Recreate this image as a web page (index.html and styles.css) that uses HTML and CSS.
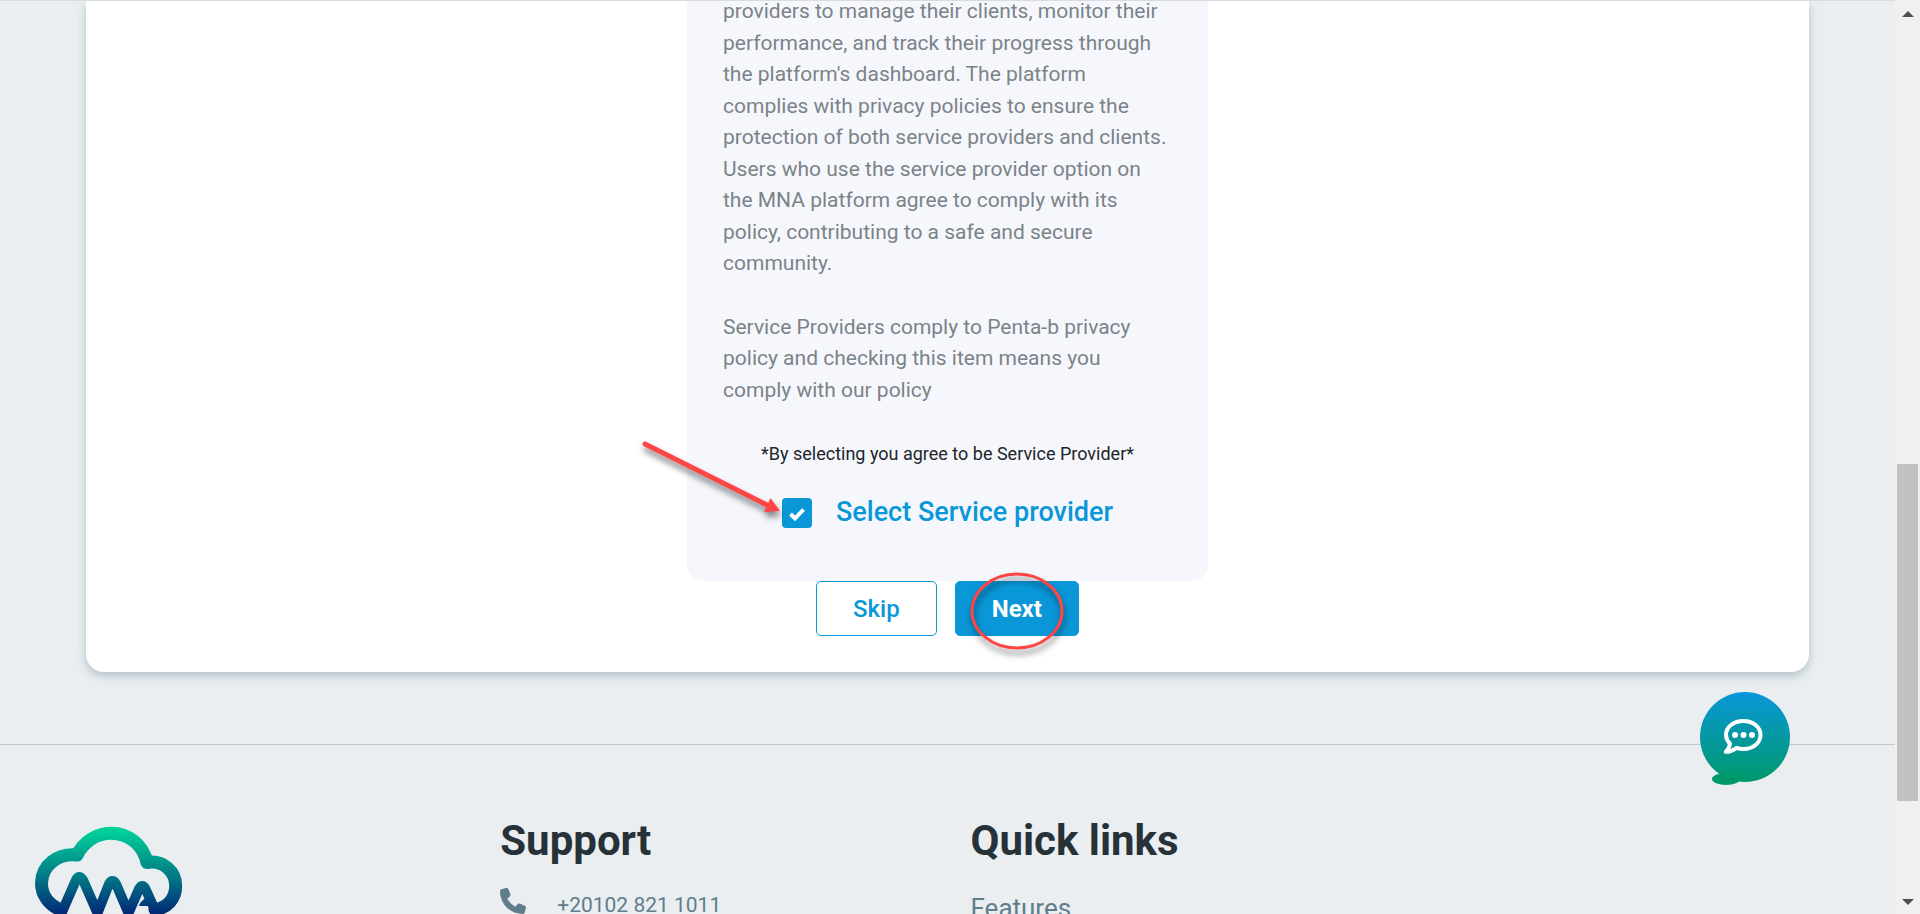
FILE: index.html
```html
<!DOCTYPE html>
<html lang="en">
<head>
  <meta charset="UTF-8">
  <meta name="viewport" content="width=device-width, initial-scale=1.0">
  <title>Service Provider - MNA</title>
  <link rel="stylesheet" href="styles.css">
</head>
<body>
  <div class="page">
    <main class="main">
      <section class="card">
        <div class="provider">
          <p class="terms">providers to manage their clients, monitor their performance, and track their progress through the platform's dashboard. The platform complies with privacy policies to ensure the protection of both service providers and clients. Users who use the service provider option on the MNA platform agree to comply with its policy, contributing to a safe and secure community.</p>
          <p class="terms">Service Providers comply to Penta-b privacy policy and checking this item means you comply with our policy</p>
          <p class="note">*By selecting you agree to be Service Provider*</p>
          <div class="choice">
            <input type="checkbox" id="provider-check" checked>
            <label for="provider-check">Select Service provider</label>
            <svg class="arrow" width="150" height="94" viewBox="0 0 150 94">
              <path d="M8 8 L130 69" stroke="#ff4545" stroke-width="5" stroke-linecap="round"/>
              <path d="M143 75 L133.500 62 L127 76 Z" fill="#ff4545"/>
            </svg>
          </div>
        </div>
        <div class="actions">
          <button type="button" class="btn btn-outline">Skip</button>
          <button type="button" class="btn btn-primary">Next
            <svg class="ring" width="104" height="88" viewBox="0 0 104 88">
              <ellipse cx="52" cy="42" rx="45" ry="37" fill="none" stroke="#ff4545" stroke-width="3"/>
            </svg>
          </button>
        </div>
      </section>
    </main>

    <footer class="footer">
      <div class="footer-col">
        <svg class="logo" width="152" height="110" viewBox="0 0 152 110">
          <defs>
            <linearGradient id="logo-fill" gradientUnits="userSpaceOnUse" x1="0" y1="6" x2="0" y2="86">
              <stop offset="0" stop-color="#00cf9b"/>
              <stop offset="0.55" stop-color="#007a85"/>
              <stop offset="1" stop-color="#032c78"/>
            </linearGradient>
          </defs>
          <g fill="none" stroke="url(#logo-fill)" stroke-linejoin="round" stroke-linecap="round">
            <path stroke-width="13" d="M27 84 C15 79 7.500 69 7.500 57 C8 39 24 27 43 29 C50 15 63 7.300 77 7.300 C95 7.300 109 19 113 36.500 C129 34 141.700 45 141.700 60 C141.700 73 133 82 121 83.500"/>
            <path stroke-width="10" d="M28 86 L42 54 Q45 48 49 54 L63.500 87 L75 58 Q78.500 52 82 58 L94.500 87 L105 63 Q108.500 57 111.500 63 L121 84"/>
          </g>
          <path fill="url(#logo-fill)" d="M105 80 C106 76 109 73 113 72 L116 80 Z"/>
        </svg>
      </div>
      <div class="footer-col">
        <h2>Support</h2>
        <a class="phone" href="tel:+201028211011">
          <svg width="26" height="26" viewBox="0 0 512 512"><path fill="currentColor" d="M164.900 24.600c-7.700-18.600-28-28.500-47.400-23.200l-88 24C12.100 30.200 0 46 0 64c0 247.400 200.600 448 448 448c18 0 33.800-12.100 38.600-29.500l24-88c5.300-19.400-4.600-39.700-23.200-47.400l-96-40c-16.300-6.800-35.200-2.100-46.300 11.600L304.700 368C234.300 334.700 177.300 277.700 144 207.300L193.300 167c13.700-11.200 18.400-30 11.600-46.300l-40-96z"/></svg>
          <span>+20102 821 1011</span>
        </a>
      </div>
      <div class="footer-col">
        <h2>Quick links</h2>
        <a class="link" href="#">Features</a>
      </div>
    </footer>
  </div>

  <div class="scrollbar">
    <svg width="12" height="6" viewBox="0 0 12 6"><path d="M6 0 L12 6 H0 Z" fill="#505050"/></svg>
    <div class="track">
      <div class="thumb"></div>
    </div>
    <svg width="12" height="6" viewBox="0 0 12 6"><path d="M0 0 H12 L6 6 Z" fill="#505050"/></svg>
  </div>

  <button type="button" class="chat" aria-label="Chat">
    <svg width="40" height="35" viewBox="0 0 40 35">
      <path d="M20.500 2 C30 2 37.500 8 37.500 16 C37.500 24 30 30 20.500 30 C18 30 15.500 29.500 13.500 28.800 C10.500 31 6.500 33 2.800 32.800 C5 30.500 6.800 27.500 7 24.600 C4.500 22.200 3 19.200 3 16 C3 8 10.500 2 20.500 2 Z" fill="none" stroke="#fff" stroke-width="4" stroke-linejoin="round"/>
      <g fill="#fff"><circle cx="12" cy="16" r="3"/><circle cx="20.500" cy="16" r="3"/><circle cx="29" cy="16" r="3"/></g>
    </svg>
  </button>
</body>
</html>
```
FILE: styles.css
```css
* {
  box-sizing: border-box;
}
body {
  margin: 0;
  height: 100vh;
  display: flex;
  overflow: hidden;
  font-family: Roboto, sans-serif;
  background-color: #eaeef1;
  color: #212529;
}
h2, p {
  margin: 0;
}
.page {
  flex: 1;
  min-width: 0;
  overflow: hidden;
  border-top: 1px solid #d9dcdf;
}
.main {
  padding: 0 86px 72px;
  border-bottom: 1px solid #c3c8cd;
}
.card {
  display: flex;
  flex-direction: column;
  align-items: center;
  padding-bottom: 36px;
  background-color: #fff;
  border-radius: 0 0 18px 18px;
  box-shadow: 0 4px 10px #b4c2c8;
}

/* Service provider panel */
.provider {
  width: 521px;
  max-width: 100%;
  padding: 0 36px 53px;
  background-color: #f5f7fd;
  border-radius: 0 0 16px 16px;
}
.terms {
  font-size: 21px;
  line-height: 1.5;
  color: #7b8388;
}
.terms:first-child {
  margin-top: -5px;
  margin-bottom: 32px;
}
.note {
  margin-top: 34px;
  font-size: 18px;
  line-height: 28px;
  text-align: center;
}
.choice {
  position: relative;
  display: flex;
  justify-content: center;
  align-items: flex-start;
  gap: 24px;
  margin-top: 30px;
}
.choice label {
  font-size: 27px;
  font-weight: 500;
  line-height: 28px;
  color: #0a97d8;
}
.choice input {
  appearance: none;
  width: 30px;
  height: 30px;
  margin: 0;
  border-radius: 4px;
  background: #0a97d8 url("data:image/svg+xml,%3Csvg xmlns='http://www.w3.org/2000/svg' viewBox='0 0 30 30'%3E%3Cpath d='M8.500 16 L13 20.500 L21.500 11.500' fill='none' stroke='white' stroke-width='4'/%3E%3C/svg%3E");
}
.arrow {
  position: absolute;
  left: -86px;
  top: -62px;
  fill: none;
  filter: drop-shadow(1px 5px 3px rgba(0, 0, 0, 0.5));
}

/* Buttons */
.actions {
  display: flex;
  gap: 18px;
}
.btn {
  position: relative;
  height: 55px;
  padding: 0 36px;
  border: 1px solid #0a97d8;
  border-radius: 5px;
  font-family: inherit;
  font-size: 24px;
  font-weight: 500;
  cursor: pointer;
}
.btn-outline {
  background-color: #fff;
  color: #0a97d8;
}
.btn-primary {
  background-color: #0a97d8;
  color: #fff;
  font-weight: 700;
}
.ring {
  position: absolute;
  left: 9px;
  top: -13px;
  filter: drop-shadow(1px 5px 3px rgba(0, 0, 0, 0.5));
}

/* Footer */
.footer {
  display: grid;
  grid-template-columns: repeat(4, 1fr);
  gap: 16px;
  padding: 71px 0 0 30px;
}
.footer-col {
  display: flex;
  flex-direction: column;
  align-items: flex-start;
}
.footer h2 {
  font-size: 42px;
  font-weight: 700;
  line-height: 50px;
  color: #263238;
}
.footer a {
  color: #607d8b;
  text-decoration: none;
}
.logo {
  margin: 10px 0 0 4px;
}
.phone {
  display: flex;
  gap: 31px;
  margin-top: 22px;
  font-size: 21px;
  line-height: 34px;
}
.link {
  margin-top: 24px;
  font-size: 26px;
  line-height: 36px;
}

.scrollbar {
  width: 25px;
  display: flex;
  flex-direction: column;
  align-items: center;
  padding: 11px 0 9px;
  background-color: #f0f0f0;
}
.track {
  flex: 1;
  width: 21px;
  display: flex;
  flex-direction: column;
}
.track::before {
  content: "";
  flex: 447;
}
.track::after {
  content: "";
  flex: 98;
}
.thumb {
  flex: 337;
  background-color: #c1c1c1;
}

/* Floating chat button */
.chat {
  position: fixed;
  right: 130px;
  bottom: 132px;
  width: 90px;
  height: 90px;
  padding: 2px 4px 0 0;
  border: 0;
  border-radius: 50%;
  background: linear-gradient(#0a97d8, #00996b);
  cursor: pointer;
}
.chat::after {
  content: "";
  position: absolute;
  left: 12px;
  bottom: -3px;
  width: 28px;
  height: 12px;
  border-radius: 50%;
  background-color: #00996b;
}
```
